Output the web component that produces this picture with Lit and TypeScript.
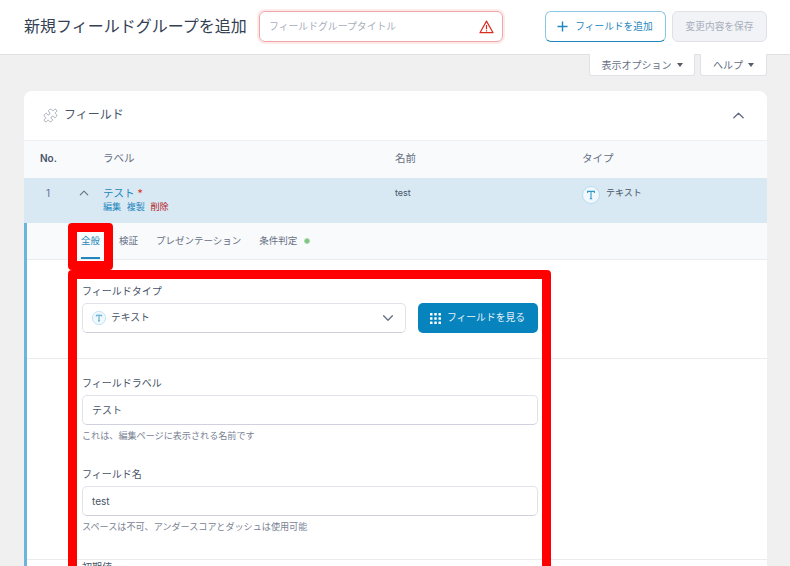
import { LitElement, html, css, svg } from "lit";
import { customElement } from "lit/decorators.js";

const chevUp = (s: number, c: string) => html`<svg width=${s} height=${s} viewBox="0 0 16 16" fill="none" stroke=${c} stroke-width="1.5" stroke-linecap="round" stroke-linejoin="round"><path d="M3 10.5 8 5.500l5 5"/></svg>`;
const tIcon = (s: number) => html`<svg width=${s} height=${s} viewBox="0 0 18 18" fill="none"><circle cx="9" cy="9" r="8.500" fill="#f0f8fc" stroke="#b9dcee"/><path d="M5.600 7V5.400h6.800V7M9 5.400v7.400M7.800 12.800h2.400" stroke="#2e97c9" stroke-width="1.100"/></svg>`;
const caret = html`<svg width="6" height="4" viewBox="0 0 6 4"><path d="M0 0h6L3 4z" fill="#555d66"/></svg>`;
const dots = [0, 1, 2].flatMap((r) => [0, 1, 2].map((c) => svg`<rect x=${c * 4} y=${r * 4} width="2.400" height="2.400" rx=".5" fill="#fff"/>`));

@customElement("app-root")
export class AppRoot extends LitElement {
  static styles = css`
    :host { display: block; position: relative; width: 790px; height: 566px; overflow: hidden; background: #f0f0f0; color: #344054; font-family: Inter, "Noto Sans CJK JP", sans-serif; font-size: 10px; line-height: 1.2; }
    * { box-sizing: border-box; }
    .top { height: 55px; background: #fff; border-bottom: 1px solid #dfe1e5; display: flex; align-items: flex-start; padding: 11px 23px 0 24px; }
    h1 { margin: 0; font-size: 16px; font-weight: 400; color: #344054; line-height: 31px; width: 235px; white-space: nowrap; }
    .title { width: 244px; height: 31px; border: 1px solid #f0a6a6; border-radius: 6px; box-shadow: 0 0 0 2px #fdeaea; display: flex; align-items: center; justify-content: space-between; padding: 0 8px 0 9px; color: #a8afbc; font-size: 9.850px; }
    .acts { margin-left: auto; display: flex; gap: 6px; }
    .btn { height: 31px; border-radius: 6px; display: flex; align-items: center; justify-content: center; font-size: 9.700px; white-space: nowrap; }
    .add { width: 121px; gap: 7px; background: #fff; color: #1f87bd; border: 1px solid #8cc6e2; border-bottom-color: #1f87bd; padding-right: 1px; }
    .save { width: 95px; background: #f2f3f7; color: #a8afbc; border: 1px solid #dfe1e7; }
    .opts { height: 22px; display: flex; justify-content: flex-end; gap: 5px; padding-right: 23px; margin-top: -1px; }
    .opt { height: 22px; background: #fff; border: 1px solid #e0e2e7; border-top: 0; border-radius: 0 0 3px 3px; display: flex; align-items: center; justify-content: center; gap: 5px; color: #667085; font-size: 10px; }
    .o1 { width: 106px; } .o2 { width: 67px; }
    .card { margin: 15px 23px 0 24px; background: #fff; border-radius: 8px 8px 0 0; }
    .chead { height: 49px; display: flex; align-items: center; padding: 0 21px 0 19px; font-size: 12px; color: #475467; }
    .chead > svg { margin-right: 6px; }
    .chead .up { margin-left: auto; display: flex; }
    .cols { display: grid; grid-template-columns: 16px 63px 292px 187px 1fr; }
    .thead { height: 38px; align-items: center; background: #f9fafb; border-top: 1px solid #eef0f3; font-size: 10.500px; color: #667085; }
    .thead .no { grid-column: 2; font-weight: 600; color: #475467; font-size: 10px; padding-bottom: 3px; }
    .row { height: 45px; background: #d8e9f4; align-items: start; padding-top: 8px; font-size: 9px; color: #475467; }
    .num { grid-column: 2; display: flex; align-items: center; height: 14px; font-size: 10px; color: #667085; }
    .num span { width: 38px; padding-left: 6px; }
    .lab { color: #1f87bd; font-size: 10.500px; line-height: 14px; padding-top: 1px; margin-bottom: -1px; }
    .lab i { color: #d92d20; font-style: normal; }
    .links { display: flex; gap: 5.500px; font-size: 9.100px; line-height: 13px; color: #1f87bd; }
    .links b { font-weight: 400; color: #b42318; }
    .nm { line-height: 14px; }
    .ty { display: flex; gap: 6px; line-height: 14px; }
    .ty svg { flex: none; }
    .body { border-left: 3px solid #6bb5dc; }
    .tabs { height: 37px; background: #f9fafb; border-bottom: 1px solid #eaecf0; display: flex; padding-left: 54px; font-size: 9.500px; color: #667085; }
    .tab { margin-right: 18px; padding-top: 12px; white-space: nowrap; }
    .tab.on { color: #1f87bd; margin-right: 19px; }
    .tab.on::after { content: ""; display: block; height: 2px; background: #1f87bd; margin-top: 11px; }
    .tab em { display: inline-block; width: 6px; height: 6px; border-radius: 50%; background: #7cc47f; border: 1px solid #a9dbab; margin-left: 7px; vertical-align: 0; }
    .sec { padding: 24px 229px 0 55px; border-bottom: 1px solid #eaecf0; }
    .s1 { height: 99px; }
    .s2 { height: 201px; padding-top: 17px; }
    .s3 { padding-top: 0; border: 0; }
    label { display: block; font-size: 10px; line-height: 14px; color: #475467; margin-bottom: 5px; white-space: nowrap; }
    .line { display: flex; gap: 12px; }
    .inp { height: 30px; background: #fff; border: 1px solid #e1e3ea; border-bottom-color: #cfd2de; border-radius: 5px; display: flex; align-items: center; padding: 0 9px; font-size: 10px; color: #475467; }
    .sel { width: 324px; gap: 5px; padding-right: 10px; font-size: 9.800px; }
    .sel .ch { margin-left: auto; display: flex; transform: rotate(180deg); }
    .see { width: 120px; height: 30px; border-radius: 5px; background: #0783be; color: #e7f3f9; font-size: 9.800px; display: flex; align-items: center; justify-content: center; gap: 6px; padding-right: 1px; }
    .hint { font-size: 9.100px; line-height: 12px; color: #7a8394; margin-top: 5px; height: 12px; white-space: nowrap; }
    .gap { height: 25px; }
    .red { position: absolute; border: 9px solid #f00; border-radius: 4px; pointer-events: none; }
    .r1 { left: 68px; top: 223px; width: 45px; height: 47px; }
    .r2 { left: 68px; top: 270px; width: 483px; height: 320px; }
  `;

  render() {
    return html`
      <header class="top">
        <h1>新規フィールドグループを追加</h1>
        <div class="title"><span>フィールドグループタイトル</span>
          <svg width="15" height="14" viewBox="0 0 16 15" fill="none" stroke="#d92d20" stroke-width="1.300" stroke-linejoin="round"><path d="M8 1.200 15 13.600H1z"/><path d="M8 5.400v4.400M8 11v1.200"/></svg>
        </div>
        <div class="acts">
          <div class="btn add"><svg width="11" height="11" viewBox="0 0 11 11" stroke="#1f87bd" stroke-width="1.400"><path d="M5.500 .5v10M.5 5.500h10"/></svg>フィールドを追加</div>
          <div class="btn save">変更内容を保存</div>
        </div>
      </header>
      <div class="opts">
        <div class="opt o1">表示オプション ${caret}</div>
        <div class="opt o2">ヘルプ ${caret}</div>
      </div>
      <section class="card">
        <div class="chead">
          <svg width="15" height="15" viewBox="0 0 24 24" fill="none" stroke="#a4abb9" stroke-width="1.600" stroke-linejoin="round"><path d="M19.439 7.850c-.049.322.059.648.289.878l1.568 1.568c.47.47.706 1.087.706 1.704s-.235 1.233-.706 1.704l-1.611 1.611a.98.98 0 0 1-.837.276c-.47-.07-.802-.48-.968-.925a2.501 2.501 0 1 0-3.214 3.214c.446.166.855.497.925.968a.979.979 0 0 1-.276.837l-1.610 1.610a2.404 2.404 0 0 1-1.705.707 2.402 2.402 0 0 1-1.704-.706l-1.568-1.568a1.026 1.026 0 0 0-.877-.29c-.493.074-.84.504-1.020.968a2.500 2.500 0 1 1-3.237-3.237c.464-.18.894-.527.967-1.020a1.026 1.026 0 0 0-.289-.877l-1.568-1.568A2.402 2.402 0 0 1 1.998 12c0-.617.236-1.234.706-1.704L4.230 8.770c.24-.24.581-.353.917-.303.515.077.877.528 1.073 1.010a2.500 2.500 0 1 0 3.259-3.259c-.482-.196-.933-.558-1.010-1.073-.05-.336.062-.676.303-.917l1.525-1.525A2.402 2.402 0 0 1 12 1.998c.617 0 1.234.236 1.704.706l1.568 1.568c.23.23.556.338.877.29.493-.074.84-.504 1.020-.968a2.500 2.500 0 1 1 3.237 3.237c-.464.18-.894.527-.967 1.020Z"/></svg>
          フィールド
          <span class="up">${chevUp(15, "#667085")}</span>
        </div>
        <div class="cols thead"><span class="no">No.</span><span>ラベル</span><span>名前</span><span>タイプ</span></div>
        <div class="cols row">
          <div class="num"><span>1</span>${chevUp(12, "#667085")}</div>
          <div><div class="lab">テスト <i>*</i></div><div class="links"><span>編集</span><span>複製</span><b>削除</b></div></div>
          <div class="nm">test</div>
          <div class="ty">${tIcon(18)}<span>テキスト</span></div>
        </div>
        <div class="body">
          <nav class="tabs">
            <div class="tab on">全般</div><div class="tab">検証</div><div class="tab">プレゼンテーション</div><div class="tab">条件判定<em></em></div>
          </nav>
          <div class="sec s1">
            <label>フィールドタイプ</label>
            <div class="line">
              <div class="inp sel">${tIcon(14)}<span>テキスト</span><span class="ch">${chevUp(14, "#667085")}</span></div>
              <div class="see"><svg width="11" height="11" viewBox="0 0 10.400 10.400">${dots}</svg>フィールドを見る</div>
            </div>
          </div>
          <div class="sec s2">
            <label>フィールドラベル</label>
            <div class="inp">テスト</div>
            <div class="hint">これは、編集ページに表示される名前です</div>
            <div class="gap"></div>
            <label>フィールド名</label>
            <div class="inp">test</div>
            <div class="hint">スペースは不可、アンダースコアとダッシュは使用可能</div>
          </div>
          <div class="sec s3"><label>初期値</label></div>
        </div>
      </section>
      <div class="red r1"></div>
      <div class="red r2"></div>
    `;
  }
}
